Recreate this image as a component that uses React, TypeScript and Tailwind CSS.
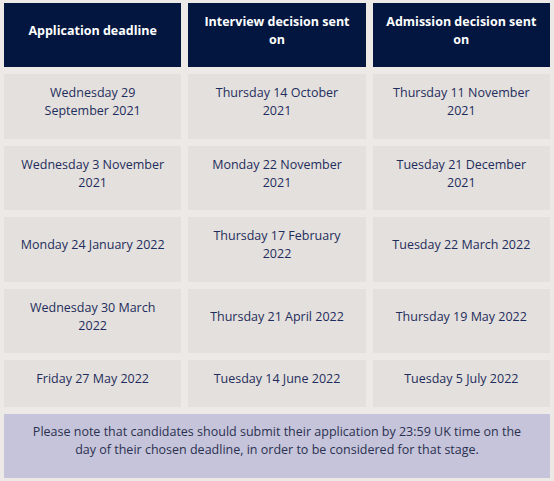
import * as React from "react";

const headers = [
  "Application deadline",
  "Interview decision sent on",
  "Admission decision sent on",
];

const rows: string[][] = [
  ["Wednesday 29 September 2021", "Thursday 14 October 2021", "Thursday 11 November 2021"],
  ["Wednesday 3 November 2021", "Monday 22 November 2021", "Tuesday 21 December 2021"],
  ["Monday 24 January 2022", "Thursday 17 February 2022", "Tuesday 22 March 2022"],
  ["Wednesday 30 March 2022", "Thursday 21 April 2022", "Thursday 19 May 2022"],
  ["Friday 27 May 2022", "Tuesday 14 June 2022", "Tuesday 5 July 2022"],
];

export default function App() {
  return (
    <div
      className="w-[554px] min-h-[481px] bg-[#ece9e6] px-[4px] pt-[3px] pb-[3px] text-[12.5px] leading-[18px] text-[#1f2d5c]"
      style={{ fontFamily: '"Open Sans", sans-serif' }}
    >
      <div className="grid grid-cols-3 gap-[7px]">
        {headers.map((h) => (
          <div
            key={h}
            className="flex items-center justify-center bg-[#02163f] px-[12px] pt-[10px] pb-[18px] text-center font-bold text-white"
          >
            {h}
          </div>
        ))}
        {rows.map((row, i) =>
          row.map((cell, j) => (
            <div
              key={`${i}-${j}`}
              className="flex items-center justify-center bg-[#e3e0dd] px-[14px] pt-[10px] pb-[18.5px] text-center"
            >
              {cell}
            </div>
          ))
        )}
      </div>
      <div className="mt-[7px] bg-[#c6c4da] px-[20px] pt-[9px] pb-[19px] text-center text-[#2a3150]">
        Please note that candidates should submit their application by 23:59 UK time on the
        day of their chosen deadline, in order to be considered for that stage.
      </div>
    </div>
  );
}
